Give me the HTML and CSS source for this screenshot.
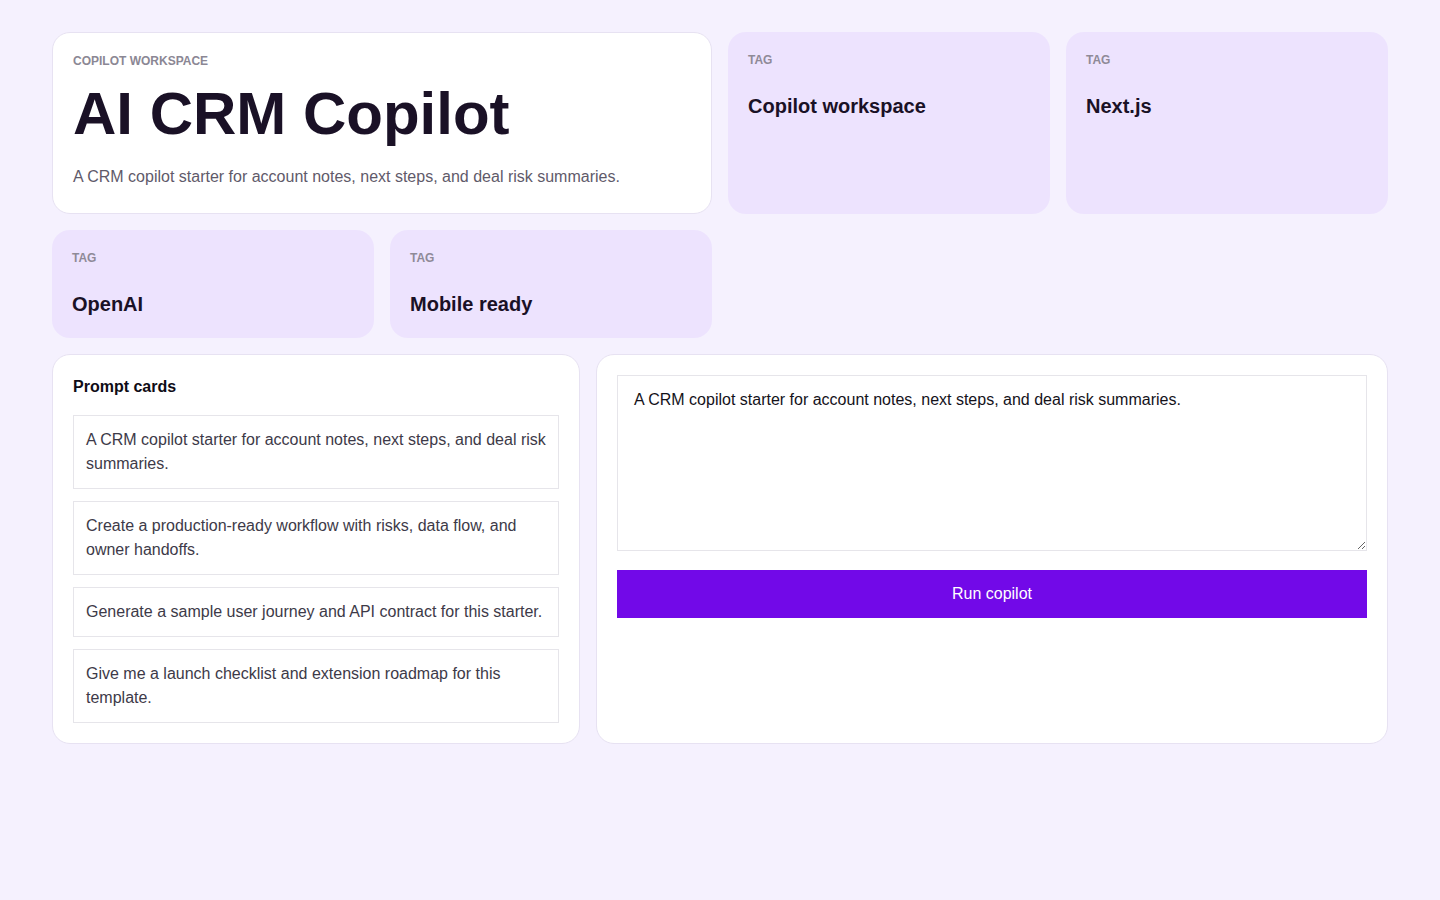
FILE: index.html
```html
<!DOCTYPE html>
<html lang="en">
<head>
<meta charset="utf-8">
<title>AI CRM Copilot</title>
<link rel="stylesheet" href="styles.css">
</head>
<body>
<main class="page">
  <section class="top-grid">
    <div class="hero card">
      <div class="eyebrow">COPILOT WORKSPACE</div>
      <h1 class="title">AI CRM Copilot</h1>
      <p class="desc">A CRM copilot starter for account notes, next steps, and deal risk summaries.</p>
    </div>
    <div class="tag">
      <div class="tag-label">TAG</div>
      <div class="tag-value">Copilot workspace</div>
    </div>
    <div class="tag">
      <div class="tag-label">TAG</div>
      <div class="tag-value">Next.js</div>
    </div>
    <div class="tag">
      <div class="tag-label">TAG</div>
      <div class="tag-value">OpenAI</div>
    </div>
    <div class="tag">
      <div class="tag-label">TAG</div>
      <div class="tag-value">Mobile ready</div>
    </div>
  </section>
  <section class="bottom-grid">
    <div class="card prompts">
      <h2 class="prompts-title">Prompt cards</h2>
      <div class="prompt-list">
        <div class="prompt">A CRM copilot starter for account notes, next steps, and deal risk summaries.</div>
        <div class="prompt">Create a production-ready workflow with risks, data flow, and owner handoffs.</div>
        <div class="prompt">Generate a sample user journey and API contract for this starter.</div>
        <div class="prompt">Give me a launch checklist and extension roadmap for this template.</div>
      </div>
    </div>
    <div class="card composer">
      <textarea class="input">A CRM copilot starter for account notes, next steps, and deal risk summaries.</textarea>
      <button class="run" type="button">Run copilot</button>
    </div>
  </section>
</main>
</body>
</html>
```

FILE: styles.css
```css
* { box-sizing: border-box; }
html, body { margin: 0; padding: 0; }
body {
  background: #f5f1fe;
  font-family: "Liberation Sans", Arial, sans-serif;
  color: #17111f;
  min-height: 900px;
}
.page {
  padding: 32px 52px;
}
.top-grid {
  display: grid;
  grid-template-columns: repeat(4, 1fr);
  gap: 16px;
}
.card {
  background: #ffffff;
  border: 1px solid #e7e2f2;
  border-radius: 18px;
  padding: 20px;
}
.hero {
  grid-column: span 2;
  padding-top: 21px;
  padding-bottom: 23px;
}
.eyebrow {
  font-size: 12px;
  line-height: 14px;
  font-weight: 700;
  color: #8b8794;
}
.title {
  margin: 16px 0 0;
  font-size: 60px;
  line-height: 60px;
  font-weight: 700;
  color: #1a1126;
}
.desc {
  margin: 20px 0 0;
  font-size: 16px;
  line-height: 26px;
  color: #5f5a6a;
}
.tag {
  background: #ede3fe;
  border-radius: 18px;
  padding: 21px 20px 20px;
}
.tag-label {
  font-size: 12px;
  line-height: 14px;
  font-weight: 700;
  color: #8f8a97;
}
.tag-value {
  margin-top: 25px;
  font-size: 20px;
  line-height: 28px;
  font-weight: 700;
  color: #1a1126;
}
.bottom-grid {
  display: grid;
  grid-template-columns: 2fr 3fr;
  gap: 16px;
  margin-top: 16px;
}
.prompts-title {
  margin: 0 0 16px;
  font-size: 16px;
  line-height: 24px;
  font-weight: 700;
  color: #0f0c16;
}
.prompt-list {
  display: flex;
  flex-direction: column;
  gap: 12px;
}
.prompt {
  border: 1px solid #e6e5ea;
  padding: 12px;
  font-size: 16px;
  line-height: 24px;
  color: #3d3a48;
  background: #ffffff;
}
.composer {
  display: flex;
  flex-direction: column;
}
.input {
  display: block;
  width: 100%;
  height: 176px;
  border: 1px solid #e6e5ea;
  border-radius: 0;
  padding: 15px 16px 13px;
  font-family: "Liberation Sans", Arial, sans-serif;
  font-size: 16px;
  color: #14121a;
  background: #ffffff;
  resize: vertical;
  outline: none;
}
.run {
  margin-top: 19px;
  height: 48px;
  width: 100%;
  border: none;
  border-radius: 0;
  background: #7209e8;
  color: #ffffff;
  font-family: "Liberation Sans", Arial, sans-serif;
  font-size: 16px;
  cursor: pointer;
}
```
